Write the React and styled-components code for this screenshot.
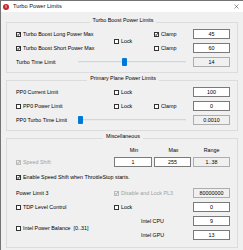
import { createGlobalStyle } from 'styled-components';
import styled from 'styled-components';

const GlobalStyle = createGlobalStyle`
  html, body {
    margin: 0;
    padding: 0;
    background: #f0f0f0;
  }
  body {
    font-family: "Liberation Sans", Arial, sans-serif;
  }
`;

const Window = styled.div`
  width: 243px;
  height: 250px;
  box-sizing: border-box;
  border-top: 1px solid #747474;
  border-left: 1px solid #747474;
  background: #f0f0f0;
  overflow: hidden;
  color: #000;
  font-size: 5.35px;
  line-height: 7px;
`;

const TitleBar = styled.div`
  height: 11px;
  background: #fff;
  display: flex;
  align-items: center;
  padding: 0 4px 0 2px;
`;

const TitleText = styled.div`
  font-size: 5.7px;
  margin-left: 4px;
  flex: 1;
  color: #111;
`;

const Body = styled.div`
  padding: 10px 5px 0 5px;
  display: flex;
  flex-direction: column;
  gap: 7px;
`;

const Group = styled.div`
  border: 1px solid #dcdcdc;
  padding: 0 7px ${(p) => p.$bottom || 5}px 9px;
  display: flex;
  flex-direction: column;
`;

const Legend = styled.div`
  align-self: center;
  margin-top: -6px;
  padding: 0 3px;
  background: #f0f0f0;
  height: 7px;
`;

const Grid = styled.div`
  display: grid;
  grid-template-columns: 98px 40px 39px 37px;
  grid-template-rows: ${(p) => p.$rows};
  row-gap: 4px;
  align-items: center;
  margin-top: ${(p) => p.$top}px;
`;

const Cell = styled.div`
  grid-column: ${(p) => p.$col || 'auto'};
  grid-row: ${(p) => p.$row || 'auto'};
  display: flex;
  align-items: center;
  justify-content: ${(p) => (p.$center ? 'center' : 'flex-start')};
  padding-left: ${(p) => p.$indent || 0}px;
  color: ${(p) => (p.$dim ? '#a0a0a0' : 'inherit')};
  white-space: nowrap;
`;

const Box = styled.span`
  width: 5px;
  height: 5px;
  box-sizing: border-box;
  border: 1px solid ${(p) => (p.$disabled ? '#bcbcbc' : '#333')};
  background: ${(p) => (p.$disabled ? '#f0f0f0' : '#fff')};
  margin-right: 2px;
  position: relative;
  flex-shrink: 0;
`;

const Tick = styled.svg`
  position: absolute;
  left: -1px;
  top: -1px;
`;

const TextBox = styled.div`
  width: ${(p) => p.$width || 37}px;
  height: 10px;
  box-sizing: border-box;
  border: 1px solid ${(p) => (p.$disabled ? '#adadad' : '#7a7a7a')};
  background: ${(p) => (p.$disabled ? '#f0f0f0' : '#fff')};
  display: flex;
  align-items: center;
  justify-content: center;
`;

const SliderLabel = styled.div`
  width: 62px;
  flex-shrink: 0;
`;

const Track = styled.div`
  position: relative;
  width: 108px;
  height: 2px;
  background: #e7eaea;
  border-top: 1px solid #d6d6d6;
  box-sizing: border-box;
`;

const Thumb = styled.div`
  position: absolute;
  top: -4px;
  width: 5px;
  height: 8px;
  border-radius: 1px;
  background: #0078d7;
`;

const Extra = styled.span`
  margin-left: 3px;
`;

function Check({ checked, disabled, children }) {
  return (
    <>
      <Box $disabled={disabled}>
        {checked && (
          <Tick width="5" height="5" viewBox="0 0 5 5">
            <path d="M1.1 2.5 L2.1 3.5 L3.9 1.2" fill="none" stroke={disabled ? '#9a9a9a' : '#111'} strokeWidth="0.9" />
          </Tick>
        )}
      </Box>
      {children}
    </>
  );
}

function Slider({ label, value }) {
  return (
    <Cell $col="1 / 4">
      <SliderLabel>{label}</SliderLabel>
      <Track>
        <Thumb style={{ left: `${value * 103}px` }} />
      </Track>
    </Cell>
  );
}

export default function App() {
  return (
    <Window>
      <GlobalStyle />
      <TitleBar>
        <svg width="6" height="6" viewBox="0 0 6 6">
          <circle cx="3" cy="3" r="3" fill="#c4262e" />
          <rect x="2.5" y="1.2" width="1" height="2.6" fill="#f4d0d0" />
        </svg>
        <TitleText>Turbo Power Limits</TitleText>
        <svg width="5" height="5" viewBox="0 0 5 5">
          <path d="M0.5 0.5 L4.5 4.5 M4.5 0.5 L0.5 4.5" stroke="#333" strokeWidth="0.5" />
        </svg>
      </TitleBar>
      <Body>
        <Group>
          <Legend>Turbo Boost Power Limits</Legend>
          <Grid $top={5} $rows="10px 10px 10px">
            <Cell $col="1" $row="1"><Check checked>Turbo Boost Long Power Max</Check></Cell>
            <Cell $col="2" $row="1 / 3"><Check>Lock</Check></Cell>
            <Cell $col="3" $row="1"><Check checked>Clamp</Check></Cell>
            <Cell $col="4" $row="1"><TextBox>45</TextBox></Cell>
            <Cell $col="1" $row="2"><Check checked>Turbo Boost Short Power Max</Check></Cell>
            <Cell $col="3" $row="2"><Check>Clamp</Check></Cell>
            <Cell $col="4" $row="2"><TextBox>60</TextBox></Cell>
            <Slider label="Turbo Time Limit" value={0.43} />
            <Cell $col="4" $row="3"><TextBox $disabled>14</TextBox></Cell>
          </Grid>
        </Group>
        <Group>
          <Legend>Primary Plane Power Limits</Legend>
          <Grid $top={5} $rows="10px 10px 10px">
            <Cell $col="1" $row="1">PP0 Current Limit</Cell>
            <Cell $col="2" $row="1"><Check>Lock</Check></Cell>
            <Cell $col="4" $row="1"><TextBox>100</TextBox></Cell>
            <Cell $col="1" $row="2"><Check>PP0 Power Limit</Check></Cell>
            <Cell $col="2" $row="2"><Check>Lock</Check></Cell>
            <Cell $col="3" $row="2"><Check>Clamp</Check></Cell>
            <Cell $col="4" $row="2"><TextBox>0</TextBox></Cell>
            <Slider label="PP0 Turbo Time Limit" value={0} />
            <Cell $col="4" $row="3"><TextBox $disabled>0.0010</TextBox></Cell>
          </Grid>
        </Group>
        <Group $bottom={7}>
          <Legend>Miscellaneous</Legend>
          <Grid $top={8} $rows="5px 10px 13px 10px 10px 10px 10px">
            <Cell $col="2" $row="1" $center>Min</Cell>
            <Cell $col="3" $row="1" $center>Max</Cell>
            <Cell $col="4" $row="1" $center>Range</Cell>
            <Cell $col="1" $row="2" $dim><Check checked disabled>Speed Shift</Check></Cell>
            <Cell $col="2" $row="2"><TextBox $width={38}>1</TextBox></Cell>
            <Cell $col="3" $row="2"><TextBox $width={37}>255</TextBox></Cell>
            <Cell $col="4" $row="2"><TextBox $disabled>1..38</TextBox></Cell>
            <Cell $col="1 / 5" $row="3"><Check checked>Enable Speed Shift when ThrottleStop starts.</Check></Cell>
            <Cell $col="1" $row="4">Power Limit 3</Cell>
            <Cell $col="2 / 4" $row="4" $dim><Check checked disabled>Disable and Lock PL3</Check></Cell>
            <Cell $col="4" $row="4"><TextBox $disabled>80000000</TextBox></Cell>
            <Cell $col="1" $row="5"><Check>TDP Level Control</Check></Cell>
            <Cell $col="2" $row="5"><Check>Lock</Check></Cell>
            <Cell $col="4" $row="5"><TextBox>0</TextBox></Cell>
            <Cell $col="1" $row="6 / 8"><Check>Intel Power Balance</Check><Extra>[0..31]</Extra></Cell>
            <Cell $col="2 / 4" $row="6" $indent={27}>Intel CPU</Cell>
            <Cell $col="4" $row="6"><TextBox>9</TextBox></Cell>
            <Cell $col="2 / 4" $row="7" $indent={27}>Intel GPU</Cell>
            <Cell $col="4" $row="7"><TextBox>13</TextBox></Cell>
          </Grid>
        </Group>
      </Body>
    </Window>
  );
}
